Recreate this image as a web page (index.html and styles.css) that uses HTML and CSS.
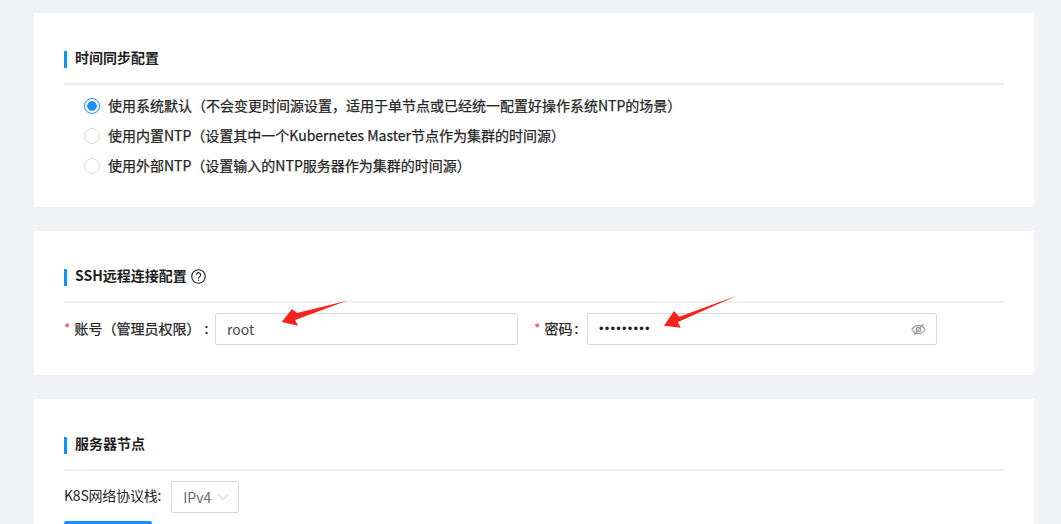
FILE: index.html
```html
<!DOCTYPE html>
<html lang="zh-CN">
<head>
<meta charset="utf-8">
<title>集群配置</title>
<link rel="stylesheet" href="styles.css">
</head>
<body>
<main class="page">
  <section class="card card-time">
    <h2 class="title"><span>时间同步配置</span></h2>
    <div class="radios">
      <label class="radio"><i class="dot on"></i><span>使用系统默认（不会变更时间源设置，适用于单节点或已经统一配置好操作系统NTP的场景）</span></label>
      <label class="radio"><i class="dot"></i><span>使用内置NTP（设置其中一个Kubernetes Master节点作为集群的时间源）</span></label>
      <label class="radio"><i class="dot"></i><span>使用外部NTP（设置输入的NTP服务器作为集群的时间源）</span></label>
    </div>
  </section>
  <section class="card card-ssh">
    <h2 class="title"><span>SSH远程连接配置</span>
      <svg class="help" viewBox="0 0 16 16" width="15" height="15" aria-hidden="true"><circle cx="8" cy="8" r="7.2" fill="none" stroke="#222" stroke-width="1.2"/><path d="M5.700 6.200a2.300 2.300 0 1 1 3.600 1.900c-.9.500-1.300 1-1.300 1.900" fill="none" stroke="#222" stroke-width="1.200"/><circle cx="8" cy="12" r=".8" fill="#222"/></svg>
    </h2>
    <div class="form-row">
      <label class="lbl lbl-user"><em>*</em>账号（管理员权限）<span class="colon">:</span></label>
      <div class="input input-user">root</div>
      <label class="lbl lbl-pass"><em>*</em>密码<span class="colon-ascii">:</span></label>
      <div class="input input-pass"><span class="dots">•••••••••</span>
        <svg class="eye" viewBox="0 0 16 16" width="15" height="15" aria-hidden="true"><path d="M1 8c1.800-3 4.200-4.500 7-4.500S13.200 5 15 8c-1.800 3-4.200 4.500-7 4.500S2.800 11 1 8z" fill="none" stroke="#9a9a9a" stroke-width="1.300"/><circle cx="8" cy="8" r="2.400" fill="none" stroke="#9a9a9a" stroke-width="1.300"/><path d="M3 14 13 2" stroke="#9a9a9a" stroke-width="1.300"/></svg>
      </div>
    </div>
  </section>
  <section class="card card-nodes">
    <h2 class="title"><span>服务器节点</span></h2>
    <div class="select-row">
      <span class="select-label">K8S网络协议栈:</span>
      <div class="select">IPv4
        <svg viewBox="0 0 12 12" width="12" height="12" aria-hidden="true"><path d="M1 3.500 6 8.500l5-5" fill="none" stroke="#bdbdbd" stroke-width="1"/></svg>
      </div>
    </div>
    <div class="btn"></div>
  </section>
</main>
<svg class="arrow arrow-1" viewBox="0 0 70 30" width="70" height="30" aria-hidden="true"><path d="M68 1.700 18 14 13 10 2.700 23 19 26.700 16 21z" fill="#f5231c"/></svg>
<svg class="arrow arrow-2" viewBox="0 0 76 36" width="76" height="36" aria-hidden="true"><path d="M73.700.7 16.300 21.700 11 16 1 30.700 17.700 32.700 15 27z" fill="#f5231c"/></svg>
</body>
</html>
```
FILE: styles.css
```css
* { box-sizing: border-box; }
html, body { margin: 0; height: 524px; overflow: hidden; }
body {
  position: relative;
  background: #f0f2f5;
  font-family: "Noto Sans CJK SC", "Noto Sans", sans-serif;
  font-size: 14px;
  color: #262626;
}
.page { height: 524px; overflow: hidden; padding: 13px 27px 0 34px; display: flex; flex-direction: column; gap: 24px; }
.card { background: #fff; padding: 38px 30px 0; flex: none; }
.card-time { height: 194px; }
.card-ssh { height: 144px; }
.card-nodes { height: 125px; }
.title {
  margin: 0;
  height: 34px;
  border-bottom: 2px solid #eeeeee;
  font-size: 14px;
  font-weight: 700;
  color: #1f1f1f;
  display: flex;
  align-items: flex-start;
  gap: 4px;
}
.title span {
  border-left: 3px solid #0a94ff;
  padding-left: 8px;
  height: 17px;
  line-height: 13px;
}
.help { margin-top: 0; }
.radios { padding: 5px 0 0 20px; }
.radio { display: flex; align-items: center; gap: 8px; height: 30px; line-height: 30px; -webkit-text-stroke: .25px #262626; }
.dot { width: 16px; height: 16px; border-radius: 50%; border: 1px solid #dcdcdc; flex: none; background: #fff; margin-top: 1px; }
.dot.on { border-color: #1890ff; background: radial-gradient(circle, #1890ff 0 4.500px, #fff 5px); }
.form-row { display: flex; align-items: center; padding-top: 10px; }
.lbl { white-space: nowrap; line-height: 30px; height: 32px; -webkit-text-stroke: .25px #262626; }
.lbl em { color: #f5424d; font-style: normal; margin-right: 4px; font-size: 14px; -webkit-text-stroke: 0; }
.colon { margin-left: 4px; }
.colon-ascii { margin-left: 2px; }
.lbl-user { width: 151px; }
.lbl-pass { width: 53px; margin-left: 16px; }
.input {
  height: 32px;
  border: 1px solid #d9d9d9;
  border-radius: 2px;
  display: flex;
  align-items: center;
  padding: 0 11px;
  line-height: 28px;
  color: #4a4a4a;
}
.input-user { width: 303px; }
.input-pass { width: 350px; justify-content: space-between; }
.dots { letter-spacing: 1.200px; font-size: 13px; color: #1f1f1f; font-family: "Liberation Sans", sans-serif; }
.eye { margin-right: -1px; }
.select-row { display: flex; align-items: center; gap: 10px; padding-top: 10px; }
.select-label { line-height: 28px; height: 32px; letter-spacing: -.2px; }
.select {
  width: 68px;
  height: 32px;
  border: 1px solid #d9d9d9;
  border-radius: 2px;
  display: flex;
  align-items: center;
  justify-content: space-between;
  padding: 0 9px 0 11px;
  color: #6b6b6b;
  line-height: 28px;
}
.btn { width: 88px; height: 32px; margin-top: 8px; background: #1890ff; border-radius: 2px; }
.arrow { position: absolute; }
.arrow-1 { left: 279px; top: 299px; }
.arrow-2 { left: 663px; top: 295px; }
```
